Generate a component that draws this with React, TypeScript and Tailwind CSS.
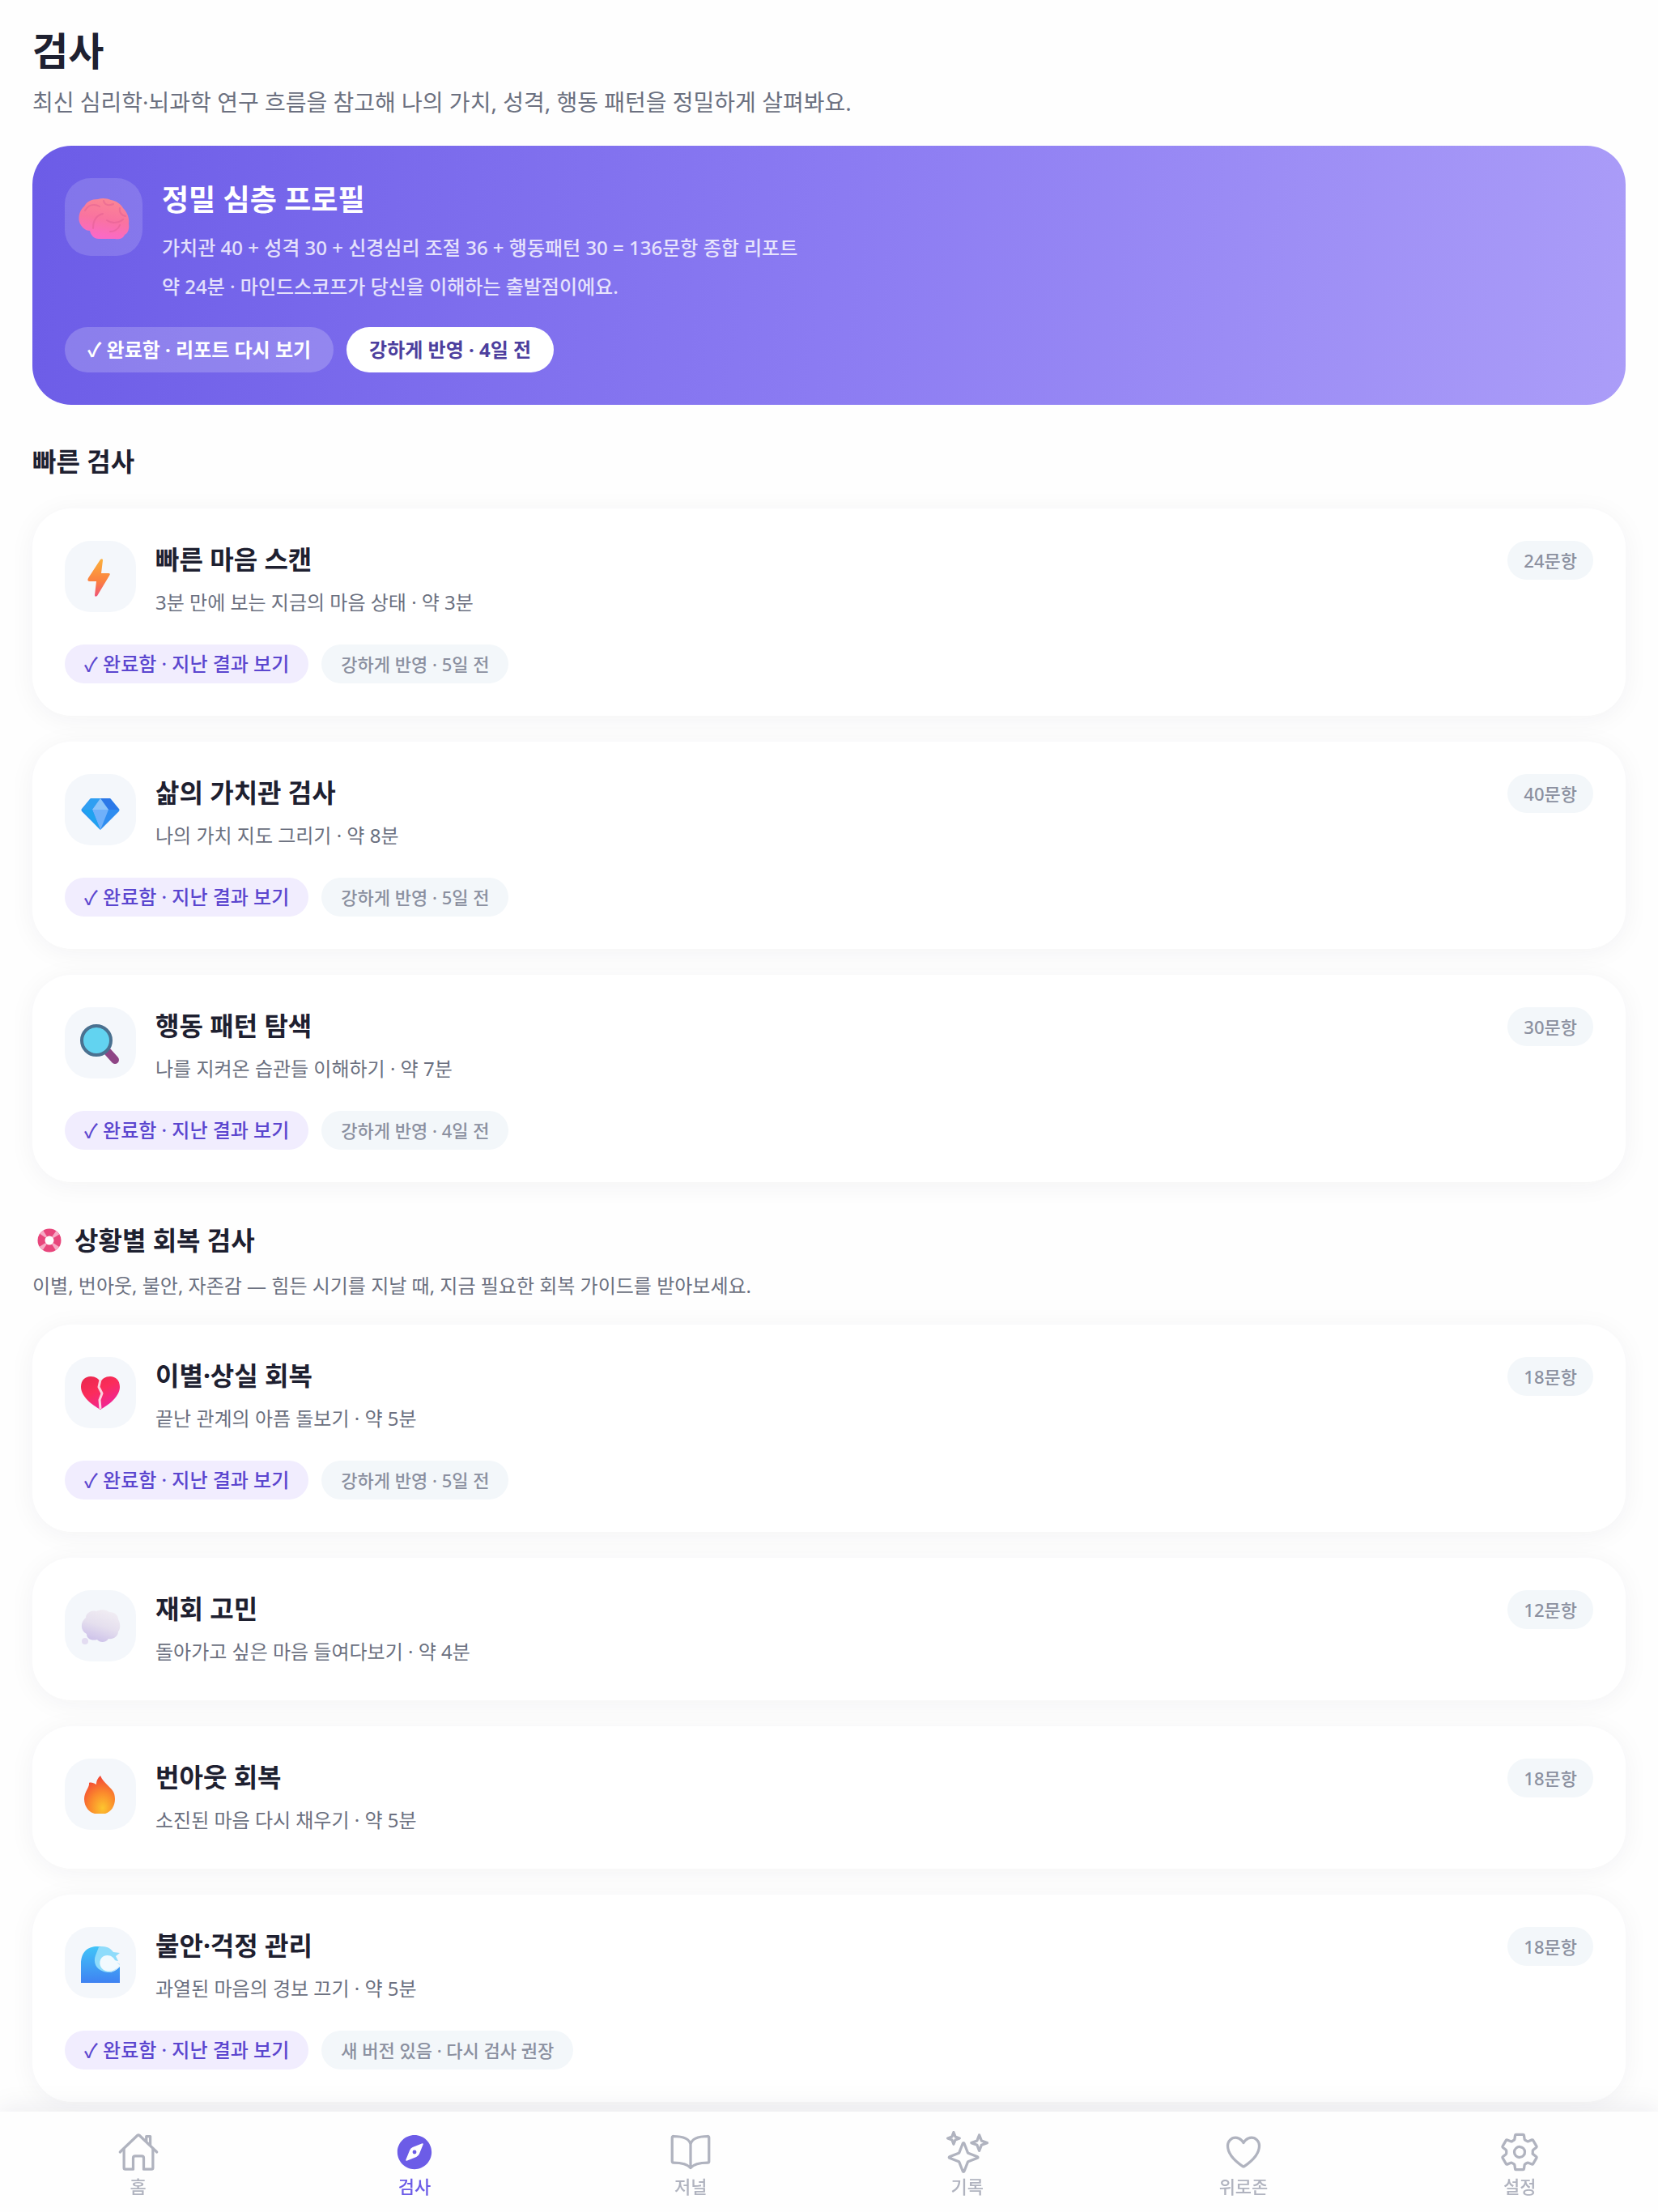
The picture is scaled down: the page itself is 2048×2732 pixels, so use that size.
import type { ComponentType, ReactNode } from "react";
import { IoBookOutline, IoCompass, IoHeartOutline, IoHomeOutline, IoSettingsOutline, IoSparklesOutline } from "react-icons/io5";

const gem = (
  <svg viewBox="0 0 48 48" className="size-12 overflow-visible">
    <g transform="translate(0 4)">
      <path d="M11 7q1-1 3-1h20q2 0 3 1l10 12q1 1 0 3L25 44q-1 1-2 0L1 22q-1-2 0-3z" fill="#2f8df0" />
      <path d="M12 6h12L14 20H1z" fill="#2f9ff2" />
      <path d="M24 6h12l11 14H34z" fill="#2b78e8" />
      <path d="M24 6 14 20h20z" fill="#8cc4fa" />
      <path d="M14 20h20L24 45z" fill="#6fb0fa" />
      <path d="M1 20h13l10 25z" fill="#1fa2f0" />
    </g>
  </svg>
);
const bolt = (
  <svg viewBox="0 0 48 48" className="size-12 overflow-visible">
    <defs>
      <linearGradient id="bolt" x1="0" y1="0" x2="0" y2="1">
        <stop offset="0" stopColor="#fbb03b" />
        <stop offset=".6" stopColor="#fb8040" />
        <stop offset="1" stopColor="#ef5478" />
      </linearGradient>
    </defs>
    <path d="M24 3q3-2 3 1L25 20h9q3 0 1 3L20 48q-3 2-3-1l2-17h-8q-4 0-2-4z" fill="url(#bolt)" />
  </svg>
);
const lens = (
  <svg viewBox="0 0 48 48" className="size-12 overflow-visible">
    <path d="m33 35 9 10" stroke="#8e4585" strokeWidth="10" strokeLinecap="round" />
    <circle cx="19" cy="21" r="18" fill="#62d3f0" stroke="#4a7190" strokeWidth="4" />
  </svg>
);
const heart = (
  <svg viewBox="0 0 48 48" className="size-12 overflow-visible">
    <defs>
      <linearGradient id="heart" x1="0" y1="0" x2=".6" y2="1">
        <stop offset="0" stopColor="#e8274c" />
        <stop offset=".5" stopColor="#fb2c5a" />
        <stop offset="1" stopColor="#f0259a" />
      </linearGradient>
    </defs>
    <path d="M24 45C19 42 0 31 0 17 0 9 5 4 12 4c6 0 10 3 12 7 2-4 6-7 12-7 7 0 12 5 12 13 0 14-19 25-24 28z" fill="url(#heart)" />
    <path d="m24 8-2 9 4 8-3 8 1 11" fill="none" stroke="#fbd3e0" strokeWidth="3" strokeLinejoin="round" />
  </svg>
);
const cloud = (
  <svg viewBox="0 0 48 48" className="size-12 overflow-visible">
    <defs>
      <linearGradient id="cloud" x1=".7" y1="0" x2=".3" y2="1">
        <stop offset="0" stopColor="#f1edf3" />
        <stop offset=".5" stopColor="#e5dfee" />
        <stop offset="1" stopColor="#cbbfe9" />
      </linearGradient>
    </defs>
    <path d="M6 14C6 8 13 4 19 6c6-3 13-2 16 1 7 0 11 4 11 9 3 5 3 12 0 15 0 6-6 10-12 9-3 5-11 5-14 1-7 2-13-1-13-7C-1 30-1 19 6 14z" fill="url(#cloud)" />
    <circle cx="5" cy="43" r="4" fill="#e3dcf1" />
  </svg>
);
const fire = (
  <svg viewBox="0 0 48 48" className="size-12 overflow-visible">
    <defs>
      <radialGradient id="fire" cx=".6" cy=".85" r=".8">
        <stop offset="0" stopColor="#fcc52e" />
        <stop offset=".5" stopColor="#fb8b2c" />
        <stop offset="1" stopColor="#f34b35" />
      </radialGradient>
    </defs>
    <path d="M24 1c-4 4-5 7-5 11-3-2-7-3-9-2 1 5-6 11-6 20 0 10 7 17 13 18h13c7-2 12-9 12-18 0-9-4-12-8-16-5-5-8-8-10-13z" fill="url(#fire)" />
  </svg>
);
const wave = (
  <svg viewBox="0 0 48 48" className="size-12 overflow-visible">
    <defs>
      <linearGradient id="wave" x1="0" y1="0" x2="0" y2="1">
        <stop offset="0" stopColor="#41c4f8" />
        <stop offset="1" stopColor="#3f82f2" />
      </linearGradient>
    </defs>
    <path d="M0 49V26C0 10 9 4 20 4c10 0 16 3 20 9L30 20l2 16q9 1 16-7v20z" fill="url(#wave)" />
    <path d="M22 5c9-2 14 1 18 6l8 1-5 4 3 6-6-1 8 5c-4 8-12 12-20 9-10-3-13-12-10-20z" fill="#8fdcfb" />
    <path d="M28 16c7-3 12 1 14 5l6 6c-5 7-12 9-18 7-8-3-9-14-2-18z" fill="#f2fafe" />
  </svg>
);
const brain = (
  <svg viewBox="0 0 60 60" className="size-[60px] overflow-visible">
    <defs>
      <linearGradient id="brain" x1=".6" y1="0" x2=".4" y2="1">
        <stop offset="0" stopColor="#fb8694" />
        <stop offset=".5" stopColor="#f9739f" />
        <stop offset="1" stopColor="#fb68cb" />
      </linearGradient>
    </defs>
    <path d="M0 36C-2 28 2 20 6 17 9 11 15 8 23 8c5-2 12-1 16 1 7 1 12 5 15 10 5 5 8 12 7 19 1 7-1 12-5 14-2 5-8 6-12 5H24c-6 0-10-5-11-10-6 0-11-5-13-11z" fill="url(#brain)" />
    <path d="M7 22c4-7 11-9 18-5M30 10c1 6 8 6 12 4M50 19c-1 6 3 9 7 10M17 44c0-10 4-16 12-18M34 34c5 4 14 4 20-1M38 48c5 0 10-3 12-8" fill="none" stroke="#dd5a90" strokeWidth="2" strokeLinecap="round" opacity=".45" />
  </svg>
);

type Item = { icon: ReactNode; title: string; sub: string; count: string; note?: string };

const quick: Item[] = [
  { icon: bolt, title: "빠른 마음 스캔", sub: "3분 만에 보는 지금의 마음 상태 · 약 3분", count: "24문항", note: "강하게 반영 · 5일 전" },
  { icon: gem, title: "삶의 가치관 검사", sub: "나의 가치 지도 그리기 · 약 8분", count: "40문항", note: "강하게 반영 · 5일 전" },
  { icon: lens, title: "행동 패턴 탐색", sub: "나를 지켜온 습관들 이해하기 · 약 7분", count: "30문항", note: "강하게 반영 · 4일 전" },
];
const recovery: Item[] = [
  { icon: heart, title: "이별·상실 회복", sub: "끝난 관계의 아픔 돌보기 · 약 5분", count: "18문항", note: "강하게 반영 · 5일 전" },
  { icon: cloud, title: "재회 고민", sub: "돌아가고 싶은 마음 들여다보기 · 약 4분", count: "12문항" },
  { icon: fire, title: "번아웃 회복", sub: "소진된 마음 다시 채우기 · 약 5분", count: "18문항" },
  { icon: wave, title: "불안·걱정 관리", sub: "과열된 마음의 경보 끄기 · 약 5분", count: "18문항", note: "새 버전 있음 · 다시 검사 권장" },
];

function Card({ icon, title, sub, count, note }: Item) {
  return (
    <article className="rounded-[48px] bg-white p-10 shadow-[0_4px_32px_rgba(30,30,60,0.05)]">
      <div className="flex items-start gap-6">
        <div className="flex size-[88px] shrink-0 items-center justify-center rounded-[32px] bg-[#f4f7fb]">{icon}</div>
        <div className="min-h-24 flex-1">
          <h3 className="text-[32px] leading-[46px] font-bold text-[#1e2030]">{title}</h3>
          <p className="mt-2.5 text-[24px] leading-10 text-[#6b7080]">{sub}</p>
        </div>
        <span className="rounded-full bg-[#f3f7fa] px-5 text-[22px] leading-[48px] font-medium text-[#8b90a0]">{count}</span>
      </div>
      {note && (
        <div className="mt-8 flex gap-4">
          <button className="rounded-full bg-[#f1edfe] px-6 text-[24px] leading-[48px] font-medium text-[#5b46cf]">✓ 완료함 · 지난 결과 보기</button>
          <span className="rounded-full bg-[#f3f7fa] px-6 text-[22px] leading-[48px] font-medium text-[#8b90a0]">{note}</span>
        </div>
      )}
    </article>
  );
}

const tabs: { label: string; Icon: ComponentType<{ className?: string }>; active?: boolean }[] = [
  { label: "홈", Icon: IoHomeOutline },
  { label: "검사", Icon: IoCompass, active: true },
  { label: "저널", Icon: IoBookOutline },
  { label: "기록", Icon: IoSparklesOutline },
  { label: "위로존", Icon: IoHeartOutline },
  { label: "설정", Icon: IoSettingsOutline },
];

export default function App() {
  return (
    <div className="min-h-screen bg-[#fefefe] pb-32 font-['Noto_Sans','Noto_Sans_CJK_KR',sans-serif]">
      <main className="px-10 pt-7">
        <h1 className="text-[48px] leading-[70px] font-bold text-[#1e2030]">검사</h1>
        <p className="mt-1.5 text-[28px] leading-[44px] text-[#6b7080]">최신 심리학·뇌과학 연구 흐름을 참고해 나의 가치, 성격, 행동 패턴을 정밀하게 살펴봐요.</p>

        <section className="mt-8 rounded-[48px] bg-linear-[99deg] from-[#6c5ce7] via-[#8b7bf2] to-[#ab9df8] p-10 text-white">
          <div className="flex gap-6">
            <div className="flex size-24 shrink-0 items-center justify-center rounded-[32px] bg-white/15">{brain}</div>
            <div>
              <h2 className="text-[36px] leading-[54px] font-bold">정밀 심층 프로필</h2>
              <p className="mt-2 text-[24px] leading-[48px] font-medium text-white/80">
                가치관 40 + 성격 30 + 신경심리 조절 36 + 행동패턴 30 = 136문항 종합 리포트
                <br />약 24분 · 마인드스코프가 당신을 이해하는 출발점이에요.
              </p>
            </div>
          </div>
          <div className="mt-6.5 flex gap-4">
            <button className="rounded-full bg-white/20 px-7 text-[24px] leading-[56px] font-bold">✓ 완료함 · 리포트 다시 보기</button>
            <span className="rounded-full bg-white px-7 text-[24px] leading-[56px] font-bold text-[#4d3f9e]">강하게 반영 · 4일 전</span>
          </div>
        </section>

        <h2 className="mt-12 text-[32px] leading-[44px] font-bold text-[#1e2030]">빠른 검사</h2>
        <div className="mt-9 flex flex-col gap-8">
          {quick.map((item) => (
            <Card key={item.title} {...item} />
          ))}
        </div>

        <h2 className="mt-12 flex items-center gap-3 text-[32px] leading-[48px] font-bold text-[#1e2030]">
          <svg viewBox="0 0 40 40" className="size-10">
            <circle cx="21" cy="20" r="10" fill="none" stroke="#e8467c" strokeWidth="9" />
            <circle cx="21" cy="20" r="10" fill="none" stroke="#f7a9c4" strokeWidth="9" strokeDasharray="4 11.7" strokeDashoffset="-5.85" />
          </svg>
          상황별 회복 검사
        </h2>
        <p className="mt-3 text-[24px] leading-10 text-[#6b7080]">이별, 번아웃, 불안, 자존감 — 힘든 시기를 지날 때, 지금 필요한 회복 가이드를 받아보세요.</p>
        <div className="mt-7 flex flex-col gap-8">
          {recovery.map((item) => (
            <Card key={item.title} {...item} />
          ))}
        </div>
      </main>

      <nav className="fixed inset-x-0 bottom-0 grid h-[124px] grid-cols-6 bg-[#fefefe] shadow-[0_-4px_32px_rgba(30,30,60,0.08)]">
        {tabs.map(({ label, Icon, active }) => (
          <a key={label} href="#" className={active ? "flex flex-col items-center pt-6 text-[#6c5ce7]" : "flex flex-col items-center pt-6 text-[#b0b3bf]"}>
            <Icon className="size-[52px]" />
            <span className="text-[22px] leading-8 font-medium">{label}</span>
          </a>
        ))}
      </nav>
    </div>
  );
}
